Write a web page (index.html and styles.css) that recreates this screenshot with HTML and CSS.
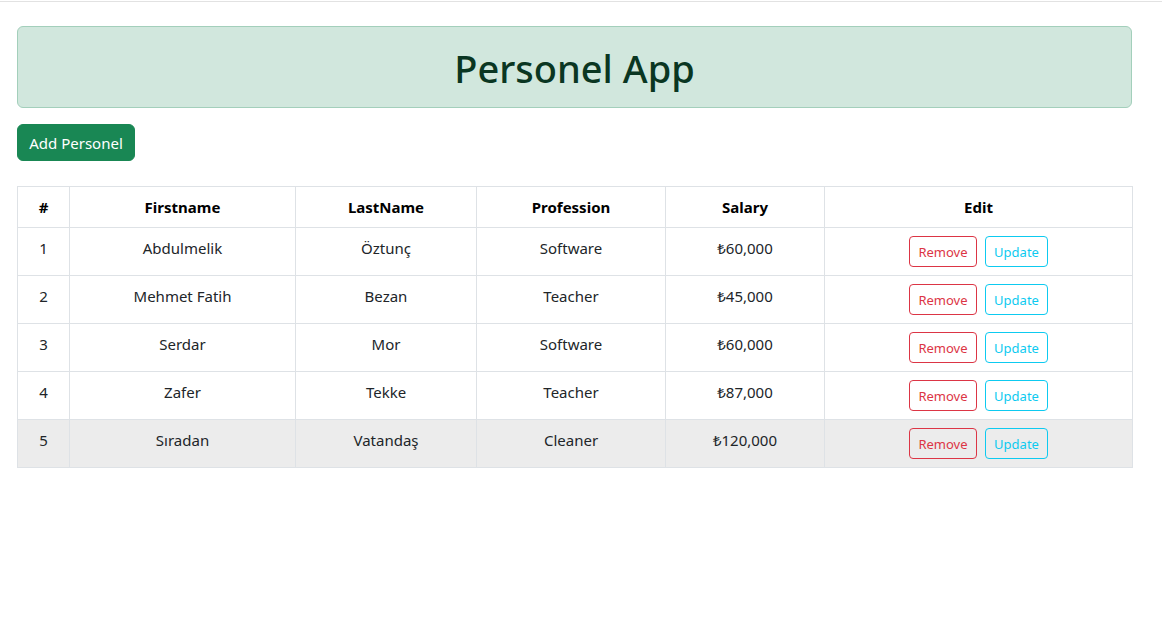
FILE: index.html
```html
<!DOCTYPE html>
<html>
<head>
<meta charset="utf-8">
<link rel="stylesheet" href="styles.css">
</head>
<body>
<div class="topline"></div>
<div class="container">
  <div class="banner"><h1>Personel App</h1></div>
  <button class="btn-add">Add Personel</button>
  <table class="tbl">
    <colgroup>
      <col class="c1"><col class="c2"><col class="c3"><col class="c4"><col class="c5"><col class="c6">
    </colgroup>
    <thead>
      <tr><th>#</th><th>Firstname</th><th>LastName</th><th>Profession</th><th>Salary</th><th>Edit</th></tr>
    </thead>
    <tbody>
      <tr><td>1</td><td>Abdulmelik</td><td>Öztunç</td><td>Software</td><td>₺60,000</td><td><button class="b-rm">Remove</button><button class="b-up">Update</button></td></tr>
      <tr><td>2</td><td>Mehmet Fatih</td><td>Bezan</td><td>Teacher</td><td>₺45,000</td><td><button class="b-rm">Remove</button><button class="b-up">Update</button></td></tr>
      <tr><td>3</td><td>Serdar</td><td>Mor</td><td>Software</td><td>₺60,000</td><td><button class="b-rm">Remove</button><button class="b-up">Update</button></td></tr>
      <tr><td>4</td><td>Zafer</td><td>Tekke</td><td>Teacher</td><td>₺87,000</td><td><button class="b-rm">Remove</button><button class="b-up">Update</button></td></tr>
      <tr class="hover"><td>5</td><td>Sıradan</td><td>Vatandaş</td><td>Cleaner</td><td>₺120,000</td><td><button class="b-rm">Remove</button><button class="b-up">Update</button></td></tr>
    </tbody>
  </table>
</div>
</body>
</html>
```

FILE: styles.css
```css
* { box-sizing: border-box; }
body {
  margin: 0;
  padding-top: 1px;
  font-family: "Noto Sans", "Open Sans", sans-serif;
  font-size: 16px;
  color: #212529;
  background: #fff;
}
.topline { height: 1px; background: #e2e2e2; }
.container {
  width: 1115px;
  margin-left: 17px;
  padding-top: 24px;
}
.banner {
  height: 82px;
  background: #d1e7dd;
  border: 1px solid #a3cfbb;
  border-radius: 6px;
  display: flex;
  align-items: center;
  justify-content: center;
  padding-top: 3px;
}
.banner h1 {
  margin: 0;
  font-size: 38px;
  font-weight: 500;
  color: #0a3622;
  line-height: 1.2;
}
.btn-add {
  margin-top: 16px;
  height: 37px;
  width: 118px;
  padding: 0;
  background: #198754;
  color: #fff;
  border: 1px solid #198754;
  border-radius: 6px;
  font-family: inherit;
  font-size: 15px;
  display: block;
}
.tbl {
  margin-top: 25px;
  width: 1115px;
  border-collapse: collapse;
  table-layout: fixed;
}
.c1 { width: 52px; }
.c2 { width: 226px; }
.c3 { width: 181px; }
.c4 { width: 189px; }
.c5 { width: 159px; }
.c6 { width: 308px; }
.tbl th, .tbl td {
  border: 1px solid #dee2e6;
  padding: 8px;
  text-align: center;
  vertical-align: top;
  line-height: 24px;
  font-size: 15px;
}
.tbl th { font-weight: 700; color: #000; }
.tbl tr.hover td { background: #ececec; }
.b-rm, .b-up {
  height: 31px;
  padding: 0 8px;
  font-family: inherit;
  font-size: 13px;
  background: transparent;
  border-radius: 4px;
  vertical-align: top;
}
.b-rm { width: 68px; color: #dc3545; border: 1px solid #dc3545; margin-right: 8px; }
.b-up { width: 63px; color: #0dcaf0; border: 1px solid #0dcaf0; }
```
